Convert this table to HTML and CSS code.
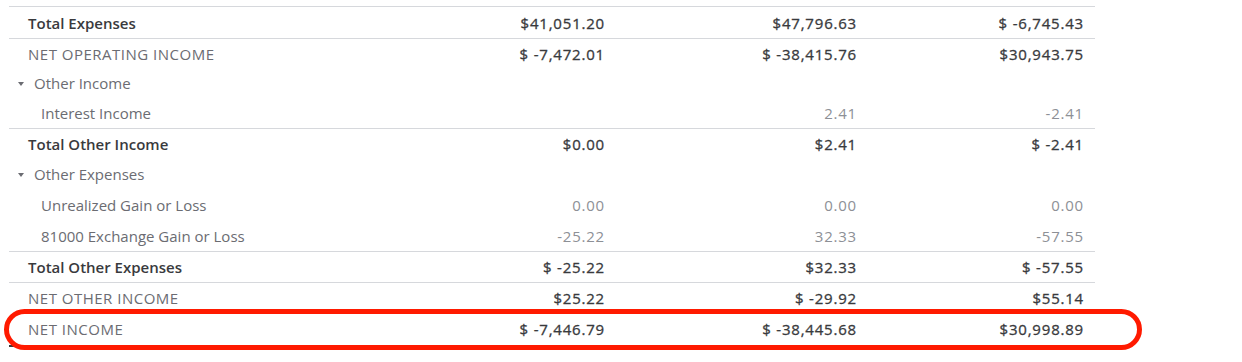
FILE: index.html
```html
<!DOCTYPE html>
<html>
<head>
<meta charset="utf-8">
<link rel="stylesheet" href="styles.css">
</head>
<body>
<div class="report">
  <div class="row total h32">
    <div class="label">Total Expenses</div>
    <div class="val">$41,051.20</div>
    <div class="val">$47,796.63</div>
    <div class="val">$ -6,745.43</div>
  </div>
  <div class="row net h30 ruled">
    <div class="label">NET OPERATING INCOME</div>
    <div class="val">$ -7,472.01</div>
    <div class="val">$ -38,415.76</div>
    <div class="val">$30,943.75</div>
  </div>
  <div class="row section h30">
    <div class="label"><span class="caret"></span>Other Income</div>
    <div class="val"></div>
    <div class="val"></div>
    <div class="val"></div>
  </div>
  <div class="row detail h30">
    <div class="label">Interest Income</div>
    <div class="val"></div>
    <div class="val">2.41</div>
    <div class="val">-2.41</div>
  </div>
  <div class="row total h31 ruled">
    <div class="label">Total Other Income</div>
    <div class="val">$0.00</div>
    <div class="val">$2.41</div>
    <div class="val">$ -2.41</div>
  </div>
  <div class="row section h30">
    <div class="label"><span class="caret"></span>Other Expenses</div>
    <div class="val"></div>
    <div class="val"></div>
    <div class="val"></div>
  </div>
  <div class="row detail h31">
    <div class="label">Unrealized Gain or Loss</div>
    <div class="val">0.00</div>
    <div class="val">0.00</div>
    <div class="val">0.00</div>
  </div>
  <div class="row detail h31">
    <div class="label">81000 Exchange Gain or Loss</div>
    <div class="val">-25.22</div>
    <div class="val">32.33</div>
    <div class="val">-57.55</div>
  </div>
  <div class="row total h31 ruled">
    <div class="label">Total Other Expenses</div>
    <div class="val">$ -25.22</div>
    <div class="val">$32.33</div>
    <div class="val">$ -57.55</div>
  </div>
  <div class="row net h31 ruled">
    <div class="label">NET OTHER INCOME</div>
    <div class="val">$25.22</div>
    <div class="val">$ -29.92</div>
    <div class="val">$55.14</div>
  </div>
  <div class="row net h31 final">
    <div class="label">NET INCOME</div>
    <div class="val">$ -7,446.79</div>
    <div class="val">$ -38,445.68</div>
    <div class="val">$30,998.89</div>
    <div class="highlight"></div>
  </div>
</div>
</body>
</html>
```
FILE: styles.css
```css
html, body {
  margin: 0;
  padding: 0;
  background: #ffffff;
}
body {
  min-height: 362px;
  font-family: "Open Sans", Lato, sans-serif;
  font-size: 15px;
  color: #6b6c72;
}
.report {
  padding-top: 6px;
  margin-left: 9px;
  width: 1086px;
}
.report > .row:first-child {
  border-top: 1px solid #d6d8dc;
}
.row {
  display: grid;
  grid-template-columns: 386px 221px 252px 227px;
  align-items: center;
  box-sizing: border-box;
  position: relative;
}
.h32 { height: 32px; }
.h31 { height: 31px; }
.h30 { height: 30px; }
.ruled { border-top: 1px solid #d6d8dc; }
.label {
  padding-left: 19px;
  white-space: nowrap;
}
.val {
  text-align: right;
  padding-right: 11px;
  white-space: nowrap;
  letter-spacing: 0.8px;
}
.total .label {
  color: #393a3d;
  font-weight: 600;
}
.total .val,
.net .val {
  color: #393a3d;
  -webkit-text-stroke: 0.3px #393a3d;
}
.net .label {
  color: #6b6c72;
  letter-spacing: 0.5px;
}
.section .label {
  padding-left: 9px;
  display: flex;
  align-items: center;
}
.caret {
  width: 0;
  height: 0;
  border-left: 3.5px solid transparent;
  border-right: 3.5px solid transparent;
  border-top: 4px solid #6b6c72;
  margin-right: 10px;
  margin-top: 1px;
}
.detail .label {
  padding-left: 32px;
}
.detail .val {
  color: #8d9096;
}
.final::after {
  content: "";
  position: absolute;
  left: 0;
  right: 0;
  bottom: -3px;
  border-bottom: 2px solid #393a3d;
}
.highlight {
  position: absolute;
  left: -5px;
  top: -4px;
  width: 1138px;
  height: 41px;
  box-sizing: border-box;
  border: 5px solid #ff1a00;
  border-radius: 21px;
  z-index: 2;
}
```
